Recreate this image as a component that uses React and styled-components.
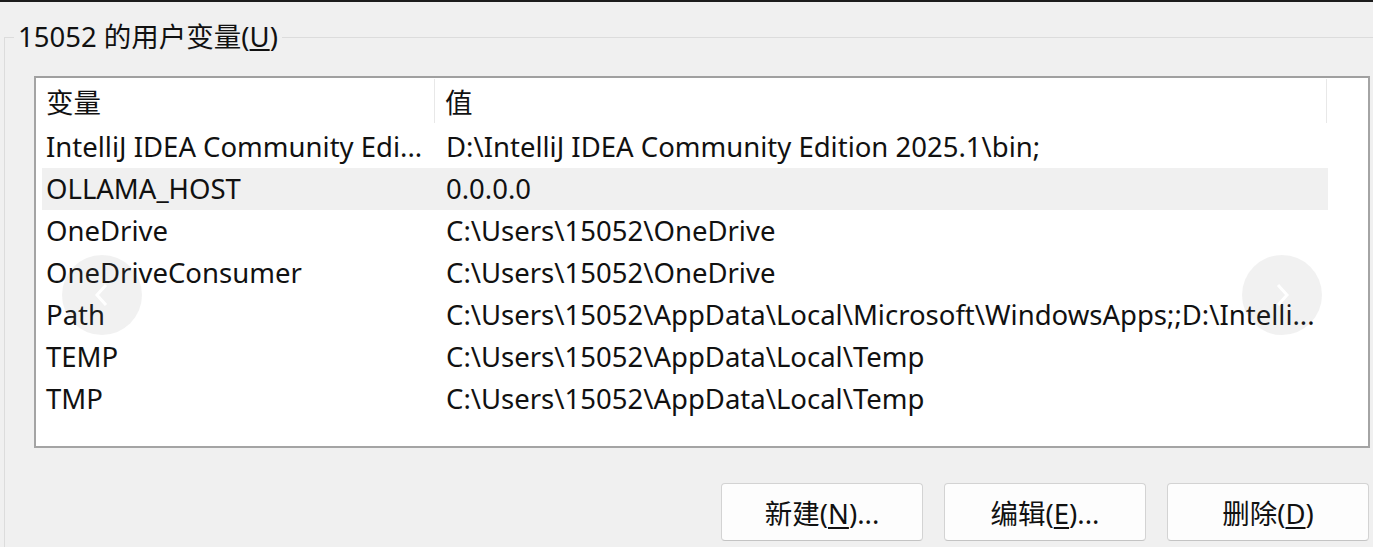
import React from "react";
import styled, { createGlobalStyle } from "styled-components";

const Global = createGlobalStyle`
  html, body { margin: 0; padding: 0; background: #f0f0f0; }
  body {
    font-family: "Noto Sans", "Noto Sans CJK SC", sans-serif;
    color: #111;
  }
`;

const Page = styled.div`
  position: relative;
  width: 1373px;
  height: 547px;
  overflow: hidden;
  background: #f0f0f0;
  border-top: 2px solid #1c1c1c;
  box-sizing: border-box;
`;

const Group = styled.fieldset`
  margin: 19px 0 0 4px;
  padding: 0;
  width: 1400px;
  height: 600px;
  border: 1px solid #dcdcdc;
  box-sizing: border-box;
`;

const Legend = styled.legend`
  margin-left: 9px;
  padding: 0 4px;
  font-size: 27.5px;
  line-height: 32px;
  color: #111;
`;

const Content = styled.div`
  padding-left: 29px;
`;

const ListBox = styled.div`
  margin-top: 23px;
  width: 1336px;
  height: 372px;
  box-sizing: border-box;
  background: #fff;
  border: 2px solid #a4a4a4;
  border-top-color: #a0a0a0;
  padding: 0 0 0 6px;
`;

const Header = styled.div`
  display: grid;
  grid-template-columns: 393px 892px;
  height: 48px;
  align-items: stretch;
`;

const HeadCell = styled.div`
  margin-top: 1px;
  height: 44px;
  display: flex;
  align-items: center;
  padding-left: ${(p) => p.$pad}px;
  border-right: 1px solid #e8e8e8;
  font-size: 27.5px;
`;

const Row = styled.div`
  display: grid;
  grid-template-columns: 400px 886px;
  width: 1286px;
  height: 42px;
  align-items: center;
  background: ${(p) => (p.$selected ? "#f0f0f0" : "transparent")};
  font-size: 27.5px;
`;

const Cell = styled.div`
  padding-left: 4px;
  white-space: nowrap;
  overflow: hidden;
  line-height: 42px;
`;

const ButtonBar = styled.div`
  margin-top: 35px;
  width: 1336px;
  display: flex;
  justify-content: flex-end;
  gap: 21px;
  padding-right: 1px;
  box-sizing: border-box;
`;

const Button = styled.button`
  width: 202px;
  height: 58px;
  background: #fdfdfd;
  border: 1px solid #d3d3d3;
  border-bottom-color: #c4c4c4;
  border-radius: 4px;
  font-family: "Noto Sans", "Noto Sans CJK SC", sans-serif;
  font-size: 27.5px;
  color: #111;
  padding: 0;
  u { text-underline-offset: 3px; }
`;

const NavCircle = styled.div`
  position: absolute;
  top: 253px;
  left: ${(p) => p.$x}px;
  width: 80px;
  height: 80px;
  border-radius: 50%;
  background: rgba(120, 120, 120, 0.1);
  display: flex;
  align-items: center;
  justify-content: center;
`;

const rows = [
  ["IntelliJ IDEA Community Edi...", "D:\\IntelliJ IDEA Community Edition 2025.1\\bin;"],
  ["OLLAMA_HOST", "0.0.0.0", true],
  ["OneDrive", "C:\\Users\\15052\\OneDrive"],
  ["OneDriveConsumer", "C:\\Users\\15052\\OneDrive"],
  ["Path", "C:\\Users\\15052\\AppData\\Local\\Microsoft\\WindowsApps;;D:\\Intelli..."],
  ["TEMP", "C:\\Users\\15052\\AppData\\Local\\Temp"],
  ["TMP", "C:\\Users\\15052\\AppData\\Local\\Temp"],
];

const Chevron = ({ dir }) => (
  <svg width="20" height="26" viewBox="0 0 20 26">
    <path
      d={dir === "left" ? "M14 3 L5 13 L14 23" : "M6 3 L15 13 L6 23"}
      fill="none"
      stroke="#fff"
      strokeWidth="3"
    />
  </svg>
);

export default function App() {
  return (
    <Page>
      <Global />
      <Group>
        <Legend>
          15052 的用户变量(<u>U</u>)
        </Legend>
        <Content>
          <ListBox>
            <Header>
              <HeadCell $pad={4}>变量</HeadCell>
              <HeadCell $pad={10}>值</HeadCell>
            </Header>
            {rows.map(([name, value, sel]) => (
              <Row key={name} $selected={sel}>
                <Cell>{name}</Cell>
                <Cell>{value}</Cell>
              </Row>
            ))}
          </ListBox>
          <ButtonBar>
            <Button>
              新建(<u>N</u>)...
            </Button>
            <Button>
              编辑(<u>E</u>)...
            </Button>
            <Button>
              删除(<u>D</u>)
            </Button>
          </ButtonBar>
        </Content>
      </Group>
      <NavCircle $x={62}>
        <Chevron dir="left" />
      </NavCircle>
      <NavCircle $x={1242}>
        <Chevron dir="right" />
      </NavCircle>
    </Page>
  );
}
